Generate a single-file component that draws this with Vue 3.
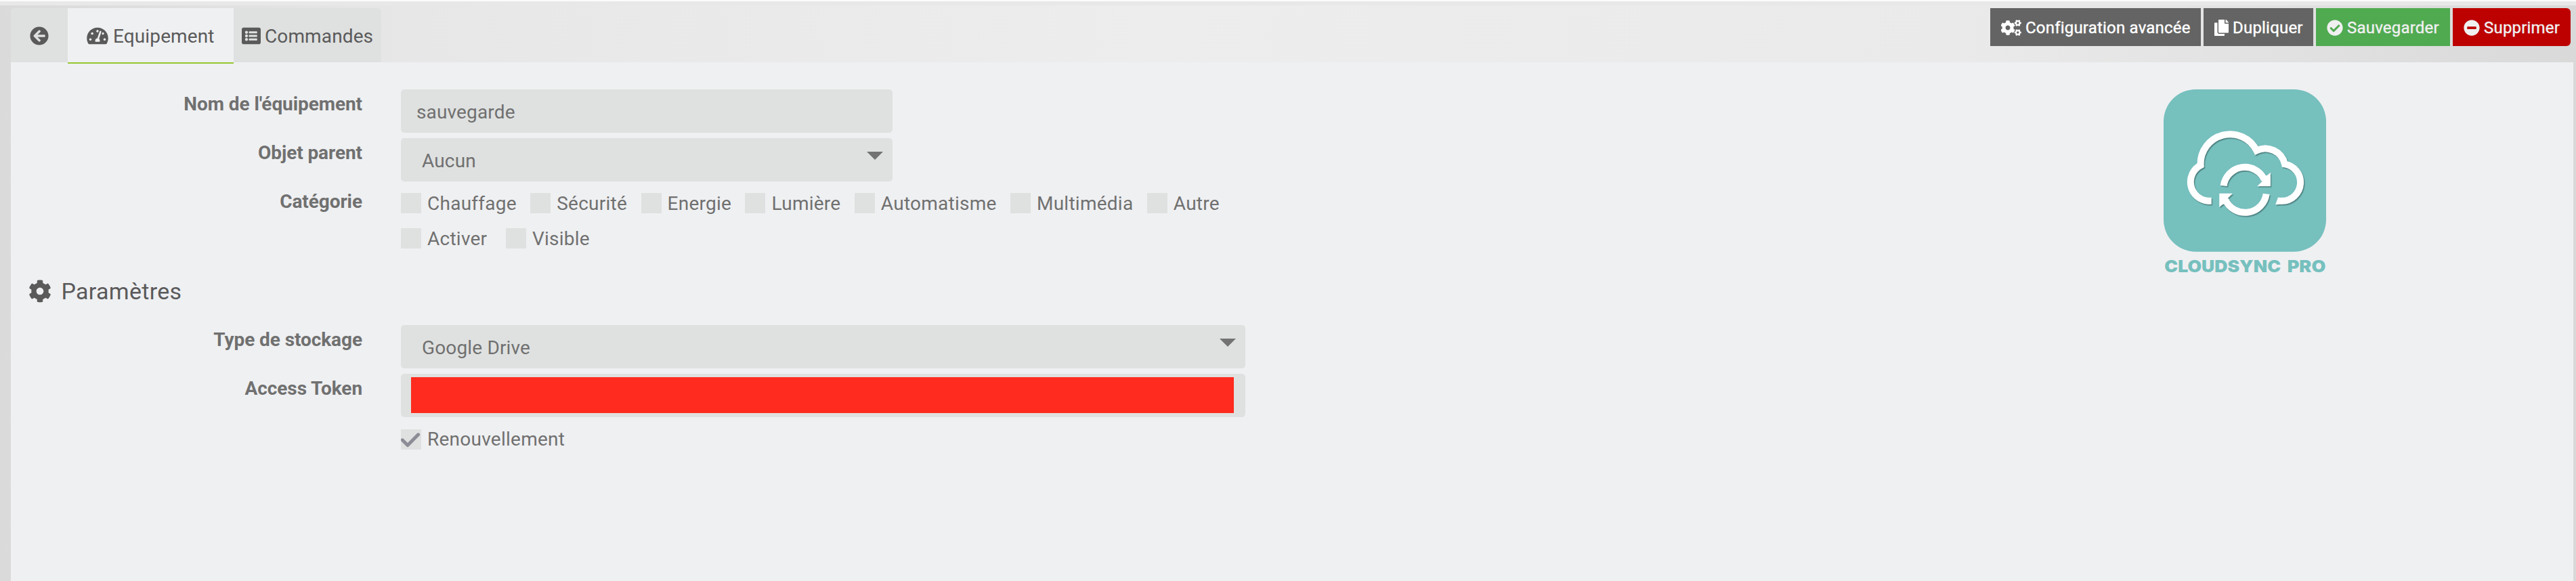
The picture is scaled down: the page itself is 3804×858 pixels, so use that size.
<script setup>
const categories = ['Chauffage', 'Sécurité', 'Energie', 'Lumière', 'Automatisme', 'Multimédia', 'Autre']
const states = ['Activer', 'Visible']

const icons = {
  back: 'M256 504C119 504 8 393 8 256S119 8 256 8s248 111 248 248-111 248-248 248zm28.9-143.6L209.4 288H392c13.3 0 24-10.7 24-24v-16c0-13.3-10.7-24-24-24H209.4l75.5-72.4c9.7-9.3 9.9-24.8.4-34.3l-11-10.9c-9.4-9.4-24.6-9.4-33.9 0L107.7 239c-9.4 9.4-9.4 24.6 0 33.9l132.7 132.7c9.4 9.4 24.6 9.4 33.9 0l11-10.9c9.5-9.5 9.3-25-.4-34.3z',
  gauge: 'M288 32C128.94 32 0 160.94 0 320c0 52.8 14.25 102.26 39.06 144.8 5.61 9.62 16.3 15.2 27.44 15.2h443c11.14 0 21.83-5.58 27.44-15.2C561.75 422.26 576 372.8 576 320c0-159.06-128.94-288-288-288zm0 64c14.71 0 26.58 10.13 30.32 23.65-1.11 2.26-2.64 4.23-3.45 6.67l-9.22 27.67c-5.13 3.49-10.97 6.01-17.64 6.01-17.67 0-32-14.33-32-32S270.33 96 288 96zM96 384c-17.67 0-32-14.33-32-32s14.33-32 32-32 32 14.33 32 32-14.33 32-32 32zm48-160c-17.67 0-32-14.33-32-32s14.33-32 32-32 32 14.33 32 32-14.33 32-32 32zm246.77-72.41l-61.33 184C343.13 347.33 352 364.54 352 384c0 11.72-3.38 22.55-8.88 32H232.88c-5.5-9.45-8.88-20.28-8.88-32 0-33.94 26.5-61.43 59.9-63.59l61.34-184.01c4.17-12.56 17.73-19.45 30.36-15.17 12.57 4.19 19.35 17.79 15.17 30.36zm14.66 57.2l15.52-46.55c3.47-1.29 7.13-2.23 11.05-2.23 17.67 0 32 14.33 32 32s-14.33 32-32 32c-11.38-.01-20.89-6.28-26.57-15.22zM480 384c-17.67 0-32-14.33-32-32s14.33-32 32-32 32 14.33 32 32-14.33 32-32 32z',
  list: 'M464 480H48c-26.51 0-48-21.49-48-48V80c0-26.51 21.49-48 48-48h416c26.51 0 48 21.49 48 48v352c0 26.51-21.49 48-48 48zM128 120c-22.09 0-40 17.91-40 40s17.91 40 40 40 40-17.91 40-40-17.91-40-40-40zm0 96c-22.09 0-40 17.91-40 40s17.91 40 40 40 40-17.91 40-40-17.91-40-40-40zm0 96c-22.09 0-40 17.91-40 40s17.91 40 40 40 40-17.91 40-40-17.91-40-40-40zm288-136v-32c0-6.63-5.37-12-12-12H204c-6.63 0-12 5.37-12 12v32c0 6.63 5.37 12 12 12h200c6.63 0 12-5.37 12-12zm0 96v-32c0-6.63-5.37-12-12-12H204c-6.63 0-12 5.37-12 12v32c0 6.63 5.37 12 12 12h200c6.63 0 12-5.37 12-12zm0 96v-32c0-6.63-5.37-12-12-12H204c-6.63 0-12 5.37-12 12v32c0 6.63 5.37 12 12 12h200c6.63 0 12-5.37 12-12z',
  copy: 'M320 448v40c0 13.255-10.745 24-24 24H24c-13.255 0-24-10.745-24-24V120c0-13.255 10.745-24 24-24h72v296c0 30.879 25.121 56 56 56h168zm0-344V0H152c-13.255 0-24 10.745-24 24v368c0 13.255 10.745 24 24 24h272c13.255 0 24-10.745 24-24V128H344c-13.2 0-24-10.8-24-24zm120.971-31.029L375.029 7.029A24 24 0 0 0 358.059 0H352v96h96v-6.059a24 24 0 0 0-7.029-16.97z',
  check: 'M504 256c0 136.967-111.033 248-248 248S8 392.967 8 256 119.033 8 256 8s248 111.033 248 248zM227.314 387.314l184-184c6.248-6.248 6.248-16.379 0-22.627l-22.627-22.627c-6.248-6.249-16.379-6.249-22.628 0L216 308.118l-70.059-70.059c-6.248-6.248-16.379-6.248-22.628 0l-22.627 22.627c-6.248 6.248-6.248 16.379 0 22.627l104 104c6.249 6.249 16.379 6.249 22.628.001z',
  minus: 'M256 8C119 8 8 119 8 256s111 248 248 248 248-111 248-248S393 8 256 8zM124 296c-6.6 0-12-5.4-12-12v-56c0-6.6 5.4-12 12-12h264c6.6 0 12 5.4 12 12v56c0 6.6-5.4 12-12 12H124z',
  cog: 'M487.4 315.7l-42.6-24.6c4.3-23.2 4.3-47 0-70.2l42.6-24.6c4.9-2.8 7.1-8.6 5.5-14-11.1-35.6-30-67.8-54.7-94.6-3.8-4.1-10-5.1-14.8-2.3L380.8 110c-17.9-15.4-38.5-27.3-60.8-35.1V25.8c0-5.6-3.9-10.5-9.4-11.7-36.7-8.2-74.3-7.8-109.2 0-5.5 1.2-9.4 6.1-9.4 11.7V75c-22.2 7.9-42.8 19.8-60.8 35.1L88.7 85.5c-4.9-2.8-11-1.9-14.8 2.3-24.7 26.7-43.6 58.9-54.7 94.6-1.7 5.4.6 11.2 5.5 14L67.3 221c-4.3 23.2-4.3 47 0 70.2l-42.6 24.6c-4.9 2.8-7.1 8.6-5.5 14 11.1 35.6 30 67.8 54.7 94.6 3.8 4.1 10 5.1 14.8 2.3l42.6-24.6c17.9 15.4 38.5 27.3 60.8 35.1v49.2c0 5.6 3.9 10.5 9.4 11.7 36.7 8.2 74.3 7.8 109.2 0 5.5-1.2 9.4-6.1 9.4-11.7v-49.2c22.2-7.9 42.8-19.8 60.8-35.1l42.6 24.6c4.9 2.8 11 1.9 14.8-2.3 24.7-26.7 43.6-58.9 54.7-94.6 1.5-5.5-.7-11.3-5.6-14.1zM256 336c-44.1 0-80-35.9-80-80s35.9-80 80-80 80 35.9 80 80-35.9 80-80 80z'
}
</script>

<template>
  <div class="page">
    <div class="strip"></div>
    <header class="topbar">
      <nav class="tabs">
        <a class="tab back">
          <svg width="28" height="28" viewBox="0 0 512 512"><path :d="icons.back" /></svg>
        </a>
        <a class="tab active">
          <svg width="32" height="28" viewBox="0 0 576 512"><path :d="icons.gauge" /></svg>
          <span>Equipement</span>
        </a>
        <a class="tab commands">
          <svg width="28" height="28" viewBox="0 0 512 512"><path :d="icons.list" /></svg>
          <span>Commandes</span>
        </a>
      </nav>
      <div class="actions">
        <button class="btn config">
          <svg width="30" height="24" viewBox="0 0 30 24">
            <path :d="icons.cog" transform="translate(-1.2 .8) scale(.0438)" />
            <path :d="icons.cog" transform="translate(24.8 5) rotate(30) scale(.0205) translate(-256 -256)" />
            <path :d="icons.cog" transform="translate(24.8 19) rotate(30) scale(.0205) translate(-256 -256)" />
          </svg>
          <span>Configuration avancée</span>
        </button>
        <button class="btn duplicate">
          <svg width="21" height="24" viewBox="0 0 448 512"><path :d="icons.copy" /></svg>
          <span>Dupliquer</span>
        </button>
        <button class="btn save">
          <svg width="24" height="24" viewBox="0 0 512 512"><path :d="icons.check" /></svg>
          <span>Sauvegarder</span>
        </button>
        <button class="btn remove">
          <svg width="24" height="24" viewBox="0 0 512 512"><path :d="icons.minus" /></svg>
          <span>Supprimer</span>
        </button>
      </div>
    </header>

    <main class="panel">
      <form class="form">
        <div class="row">
          <label class="name">Nom de l'équipement</label>
          <div class="field short">sauvegarde</div>
        </div>
        <div class="row">
          <label class="name">Objet parent</label>
          <div class="field short select"><span>Aucun</span><i class="arrow"></i></div>
        </div>
        <div class="row checks">
          <label class="name">Catégorie</label>
          <label v-for="c in categories" :key="c" class="option"><i class="box"></i><span>{{ c }}</span></label>
        </div>
        <div class="row checks">
          <label class="name"></label>
          <label v-for="s in states" :key="s" class="option wide"><i class="box"></i><span>{{ s }}</span></label>
        </div>

        <h3 class="legend">
          <svg width="34" height="34" viewBox="0 0 512 512"><path :d="icons.cog" /></svg>
          <span>Paramètres</span>
        </h3>

        <div class="row">
          <label class="name">Type de stockage</label>
          <div class="field long select"><span>Google Drive</span><i class="arrow"></i></div>
        </div>
        <div class="row">
          <label class="name">Access Token</label>
          <div class="field long token"><div class="redaction"></div></div>
        </div>
        <div class="row checks renew">
          <label class="name"></label>
          <label class="option">
            <i class="box">
              <svg width="30" height="30" viewBox="0 0 30 30"><path d="M2.2 15.8 10 23.6 25.6 7.8" /></svg>
            </i>
            <span>Renouvellement</span>
          </label>
        </div>
      </form>

      <aside class="brand">
        <svg width="240" height="280" viewBox="135 66 720 840">
          <rect x="135" y="66" width="720" height="719" rx="142" fill="#76c0be" />
          <g class="glyph">
            <path class="line" d="M347 560H333A84 84 0 0 1 299 402A131 131 0 0 1 547 337A89 89 0 0 1 672 397A82 82 0 0 1 660 560H642" />
            <path class="solid" d="M632 575 643 545V575z" />
            <path class="line" d="M401 493A95 95 0 0 1 582 467" />
            <path class="solid" d="M608 436V494H552L573 473 566 456 595 447z" />
            <path class="line" d="M590 529A95 95 0 0 1 409 555" />
            <path class="solid" d="M383 586V528H439L418 549 425 566 396 575z" />
          </g>
          <text x="139" y="877" textLength="515" lengthAdjust="spacingAndGlyphs">CLOUDSYNC</text>
          <text x="683" y="877" textLength="170" lengthAdjust="spacingAndGlyphs">PRO</text>
        </svg>
      </aside>
    </main>
  </div>
</template>

<style>
body {
  margin: 0;
}
</style>

<style scoped>
.page {
  box-sizing: border-box;
  width: 3804px;
  height: 858px;
  padding: 0 4px 0 16px;
  overflow: hidden;
  border-top: 2px solid #fbfbfc;
  background: linear-gradient(90deg, #dadada 0, #e7e7e7 600px, #ededed 1700px, #eaeaea 2900px, #d9d9d9 3804px);
  font-family: Roboto, "Liberation Sans", sans-serif;
  font-size: 28px;
  color: #707070;
}
svg {
  display: block;
  flex: none;
  fill: currentColor;
}
.strip {
  height: 6px;
  margin: 0 -4px 0 -16px;
  background: #e8e8e8;
}
.topbar {
  display: flex;
  justify-content: space-between;
  height: 84px;
  padding: 4px 4px 0 0;
  box-sizing: border-box;
}
.tabs {
  display: flex;
  height: 80px;
  color: #5a5a5a;
}
.tab {
  display: flex;
  align-items: center;
  box-sizing: border-box;
  height: 80px;
  background: #dfe1e0;
  letter-spacing: 0.12px;
  white-space: nowrap;
}
.tab svg {
  margin-top: 1px;
}
.tab span {
  line-height: 80px;
  padding-top: 3px;
}
.back {
  width: 84px;
  padding-left: 28px;
  border-top-left-radius: 5px;
}
.active {
  width: 245px;
  height: 82px;
  padding: 0 0 0 28px;
  gap: 7px;
  border-bottom: 2px solid #96c731;
  background: #eff0f2;
}
.commands {
  width: 218px;
  padding-left: 12px;
  gap: 6px;
  border-top-right-radius: 5px;
}
.actions {
  display: flex;
  gap: 4px;
}
.btn {
  display: flex;
  align-items: center;
  box-sizing: border-box;
  height: 56px;
  padding: 2px 0 0 16px;
  gap: 6px;
  border: 0;
  background: #646464;
  color: #fff;
  font: 400 24px/56px Roboto, "Liberation Sans", sans-serif;
  letter-spacing: 0.2px;
  -webkit-text-stroke: 0.4px currentColor;
  white-space: nowrap;
}
.config {
  width: 311px;
}
.duplicate {
  width: 162px;
}
.save {
  width: 198px;
  background: #50aa50;
  color: #f0f0f0;
}
.remove {
  width: 174px;
  border-radius: 0 6px 6px 0;
  background: #bd0000;
  color: #f0f0f0;
}
.panel {
  display: flex;
  justify-content: space-between;
  box-sizing: border-box;
  height: 766px;
  padding: 40px 365px 0 0;
  background: #eff0f2;
}
.row {
  display: flex;
  height: 64px;
  margin-bottom: 8px;
}
.name {
  width: 519px;
  margin-right: 57px;
  flex: none;
  font-weight: 700;
  line-height: 43px;
  letter-spacing: -0.08px;
  text-align: right;
}
.field {
  box-sizing: border-box;
  height: 64px;
  padding: 0 23px;
  border-radius: 5px;
  background: #dfe1e0;
  line-height: 67px;
  letter-spacing: 0.15px;
}
.short {
  width: 726px;
}
.long {
  width: 1247px;
}
.select {
  display: flex;
  justify-content: space-between;
  padding: 0 14px 0 31px;
}
.arrow {
  width: 24px;
  height: 12px;
  margin-top: 20px;
  background: #737373;
  clip-path: polygon(0 0, 100% 0, 50% 100%);
}
.token {
  padding: 5px 17px 6px 15px;
}
.redaction {
  height: 53px;
  background: #fe2b1e;
}
.checks {
  height: 52px;
  margin-bottom: 0;
}
.option {
  display: flex;
  height: 48px;
  margin-right: 20.4px;
  gap: 9px;
  line-height: 49px;
  letter-spacing: 0.25px;
}
.option.wide {
  margin-right: 27.5px;
}
.box {
  width: 30px;
  height: 30px;
  margin-top: 9px;
  background: #dfe1e0;
}
.box path {
  fill: none;
  stroke: #8c8c96;
  stroke-width: 5;
  stroke-linejoin: round;
  stroke-linecap: round;
}
.renew {
  padding-top: 1px;
}
.renew .option {
  line-height: 48px;
}
.legend {
  display: flex;
  align-items: center;
  height: 60px;
  margin: 20px 0;
  padding-left: 26px;
  gap: 14.5px;
  color: #5a5a5a;
  font-size: 34px;
  font-weight: 400;
  line-height: 60px;
  letter-spacing: 0.3px;
}
.brand {
  width: 240px;
}
.glyph {
  filter: drop-shadow(4px 5px 2px rgba(40, 70, 70, 0.5));
}
.line {
  fill: none;
  stroke: #fff;
  stroke-width: 30;
}
.solid {
  fill: #fff;
  stroke: #fff;
  stroke-width: 2;
  stroke-linejoin: round;
}
.brand text {
  fill: #76c0be;
  font: 900 74px Inter, "DejaVu Sans", sans-serif;
}
</style>
